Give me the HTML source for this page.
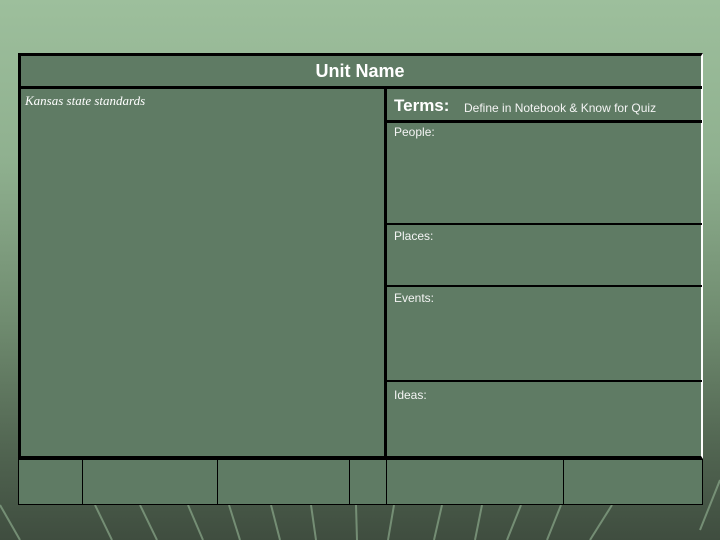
<!DOCTYPE html>
<html><head><style>
body{margin:0;width:720px;height:540px;overflow:hidden;position:relative;
background:linear-gradient(#9dbf9c 0%,#8fb08f 30%,#6f8b6f 60%,#4f624f 85%,#3f4d3f 100%);font-family:"Liberation Sans",sans-serif;color:#fff}
.a{position:absolute;background:#5f7b64;box-sizing:border-box}
.t{position:absolute;font-size:12px;color:#f4f4f4}
</style></head><body>
<svg style="position:absolute;left:0;top:0" width="720" height="540">
<g stroke="#8aa88a" stroke-width="2" opacity="0.7">
<line x1="95" y1="505" x2="112" y2="540"/><line x1="140" y1="505" x2="157" y2="540"/><line x1="188" y1="505" x2="203" y2="540"/>
<line x1="229" y1="505" x2="240" y2="540"/><line x1="271" y1="505" x2="280" y2="540"/><line x1="311" y1="505" x2="316" y2="540"/>
<line x1="356" y1="505" x2="357" y2="540"/><line x1="394" y1="505" x2="388" y2="540"/><line x1="442" y1="505" x2="434" y2="540"/>
<line x1="482" y1="505" x2="475" y2="540"/><line x1="521" y1="505" x2="507" y2="540"/><line x1="561" y1="505" x2="547" y2="540"/>
<line x1="612" y1="505" x2="590" y2="540"/><line x1="0" y1="505" x2="20" y2="540"/><line x1="720" y1="480" x2="700" y2="530"/>
</g></svg>
<div class="a" style="left:18px;top:53px;width:685px;height:406px;border:3px solid #000;border-right:2px solid #fff"></div>
<div style="position:absolute;left:18px;top:86px;width:684px;height:3px;background:#000"></div>
<div style="position:absolute;left:384px;top:86px;width:3px;height:373px;background:#000"></div>
<div style="position:absolute;left:387px;top:120px;width:315px;height:3px;background:#000"></div>
<div style="position:absolute;left:387px;top:223px;width:315px;height:2px;background:#000"></div>
<div style="position:absolute;left:387px;top:285px;width:315px;height:2px;background:#000"></div>
<div style="position:absolute;left:387px;top:380px;width:315px;height:2px;background:#000"></div>
<div class="a" style="left:18px;top:459px;width:685px;height:46px;border:1px solid #000"></div>
<div style="position:absolute;top:459px;height:46px;left:82px;width:1px;background:#000"></div>
<div style="position:absolute;top:459px;height:46px;left:217px;width:1px;background:#000"></div>
<div style="position:absolute;top:459px;height:46px;left:349px;width:1px;background:#000"></div>
<div style="position:absolute;top:459px;height:46px;left:386px;width:1px;background:#000"></div>
<div style="position:absolute;top:459px;height:46px;left:563px;width:1px;background:#000"></div>
<div style="position:absolute;left:18px;top:61px;width:684px;text-align:center;font-size:18px;font-weight:bold">Unit Name</div>
<div style="position:absolute;left:25px;top:93px;font-family:'Liberation Serif',serif;font-style:italic;font-size:13px">Kansas state standards</div>
<div style="position:absolute;left:394px;top:96px;font-size:17px;font-weight:bold">Terms:</div>
<div class="t" style="left:464px;top:101px">Define in Notebook &amp; Know for Quiz</div>
<div class="t" style="left:394px;top:125px">People:</div>
<div class="t" style="left:394px;top:229px">Places:</div>
<div class="t" style="left:394px;top:291px">Events:</div>
<div class="t" style="left:394px;top:388px">Ideas:</div>
</body></html>
